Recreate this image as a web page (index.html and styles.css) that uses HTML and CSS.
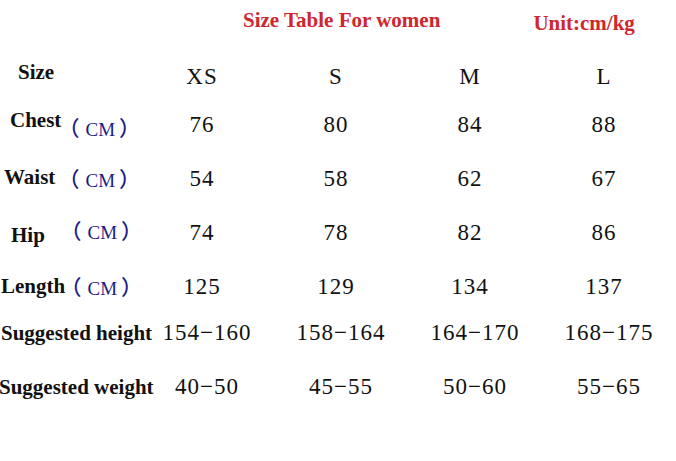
FILE: index.html
```html
<!DOCTYPE html>
<html lang="en">
<head>
<meta charset="utf-8">
<title>Size Table For women</title>
<link rel="stylesheet" href="styles.css">
</head>
<body>
<div class="page">
  <header class="head">
    <div class="title">Size Table For women</div>
    <div class="unit">Unit:cm/kg</div>
  </header>
  <div class="table">
    <div class="row">
      <div class="label"><span class="name name-size">Size</span></div>
      <div class="cell">XS</div>
      <div class="cell">S</div>
      <div class="cell">M</div>
      <div class="cell">L</div>
    </div>
    <div class="row row-chest">
      <div class="label"><span class="name name-chest">Chest</span><span class="cm cm-chest"><span class="paren paren-open">（</span>CM<span class="paren paren-close">）</span></span></div>
      <div class="cell">76</div>
      <div class="cell">80</div>
      <div class="cell">84</div>
      <div class="cell">88</div>
    </div>
    <div class="row">
      <div class="label"><span class="name name-waist">Waist</span><span class="cm"><span class="paren paren-open">（</span>CM<span class="paren paren-close">）</span></span></div>
      <div class="cell">54</div>
      <div class="cell">58</div>
      <div class="cell">62</div>
      <div class="cell">67</div>
    </div>
    <div class="row">
      <div class="label"><span class="name name-hip">Hip</span><span class="cm cm-hip"><span class="paren paren-open">（</span>CM<span class="paren paren-close">）</span></span></div>
      <div class="cell">74</div>
      <div class="cell">78</div>
      <div class="cell">82</div>
      <div class="cell">86</div>
    </div>
    <div class="row">
      <div class="label"><span class="name name-length">Length</span><span class="cm cm-length"><span class="paren paren-open">（</span>CM<span class="paren paren-close">）</span></span></div>
      <div class="cell">125</div>
      <div class="cell">129</div>
      <div class="cell">134</div>
      <div class="cell">137</div>
    </div>
    <div class="row row-height">
      <div class="label"><span class="name name-sugh">Suggested height</span></div>
      <div class="cell range">154−160</div>
      <div class="cell range">158−164</div>
      <div class="cell range">164−170</div>
      <div class="cell range">168−175</div>
    </div>
    <div class="row">
      <div class="label"><span class="name name-sugw">Suggested weight</span></div>
      <div class="cell range">40−50</div>
      <div class="cell range">45−55</div>
      <div class="cell range">50−60</div>
      <div class="cell range">55−65</div>
    </div>
  </div>
</div>
</body>
</html>
```

FILE: styles.css
```css
html, body {
  margin: 0;
  padding: 0;
  background: #ffffff;
}

.page {
  width: 676px;
  height: 461px;
  overflow: hidden;
  font-family: "Liberation Serif", "Times New Roman", serif;
  color: #111111;
}

.head {
  display: flex;
  align-items: flex-start;
  padding-left: 243px;
  margin-top: 8px;
  color: #d0262e;
  font-weight: bold;
  font-size: 21px;
  line-height: 24px;
}

.unit {
  margin-left: 93px;
  margin-top: 3px;
}

.table {
  display: flex;
  flex-direction: column;
  gap: 24px;
  margin-top: 27px;
}

.row {
  display: grid;
  grid-template-columns: 135px repeat(4, 134px);
  height: 30px;
  align-items: center;
}

.row-chest {
  margin-top: -6px;
}

.row-height {
  margin-top: -8px;
}

.label {
  display: grid;
  grid-template-columns: 69px auto;
  align-items: center;
  white-space: nowrap;
  height: 30px;
}

.name {
  font-weight: bold;
  font-size: 21px;
  line-height: 20px;
  color: #111111;
}

.name-size { padding-left: 18px; margin-bottom: 10px; }
.name-chest { padding-left: 10px; margin-bottom: 21px; }
.name-waist { padding-left: 4px; margin-bottom: 4px; }
.name-hip { padding-left: 11px; margin-top: 4px; }
.name-length { padding-left: 1px; margin-bottom: 3px; }
.name-sugh { padding-left: 1px; }
.name-sugw { margin-left: -1px; }

.cm {
  font-family: "Liberation Serif", serif;
  font-size: 19px;
  line-height: 22px;
  color: #1a1a88;
}

.paren {
  font-family: "Noto Sans CJK JP", "Noto Sans CJK SC", sans-serif;
  font-feature-settings: "halt" 1;
  font-size: 21px;
  font-weight: 500;
  line-height: 22px;
}

.paren-open { margin-right: 6px; }
.paren-close { margin-left: 4px; }

.cm-chest { margin-bottom: 4px; }
.cm-hip { margin-left: 2px; margin-bottom: 4px; }
.cm-length { margin-left: 2px; }

.cell {
  text-align: center;
  font-size: 23px;
  line-height: 30px;
  letter-spacing: 1px;
  color: #111111;
}

.range {
  padding-left: 10px;
}
```
